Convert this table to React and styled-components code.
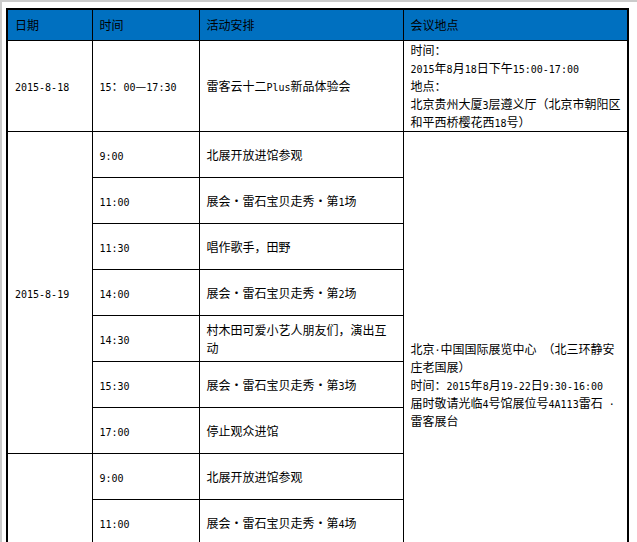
import React from 'react';
import styled, { createGlobalStyle } from 'styled-components';

const GlobalStyle = createGlobalStyle`
  html, body {
    margin: 0;
    background: #fff;
  }
`;

const Frame = styled.div`
  border-top: 2px solid #cbcbcb;
  border-left: 2px solid #cbcbcb;
  padding: 6px 0 0 4px;
  min-height: 100vh;
  box-sizing: border-box;
`;

const Table = styled.table`
  border-collapse: collapse;
  table-layout: fixed;
  width: 621px;
  border: 2px solid #000;
  font-family: "Noto Sans CJK SC", "Noto Sans", sans-serif;
  font-size: 12px;
  line-height: 18px;
  color: #000;
`;

const HeadCell = styled.th`
  background: #0070c0;
  border: 1px solid #000;
  height: 30px;
  padding: 0 7px;
  text-align: left;
  font-weight: normal;
  font-size: 12px;
`;

const Cell = styled.td`
  border: 1px solid #000;
  height: ${(p) => (p.$tall ? '90px' : '45px')};
  padding: 0 7px;
  vertical-align: middle;
  white-space: nowrap;
`;

const Ascii = styled.span`
  font-family: "DejaVu Sans Mono", "Liberation Mono", monospace;
  font-size: 10px;
  line-height: 12px;
`;

const Line = styled.div`
  white-space: nowrap;
`;

const mix = (s) =>
  s.split(/([\x20-\x7e\u00b7]+)/).map((part, i) =>
    /^[\x20-\x7e\u00b7]+$/.test(part) ? <Ascii key={i}>{part}</Ascii> : part
  );

const Lines = ({ lines }) =>
  lines.map((l, i) => <Line key={i}>{mix(l)}</Line>);

const venueOne = [
  '时间：',
  '2015年8月18日下午15:00-17:00',
  '地点：',
  '北京贵州大厦3层遵义厅（北京市朝阳区',
  '和平西桥樱花西18号）',
];

const venueTwo = [
  '北京·中国国际展览中心 （北三环静安',
  '庄老国展）',
  '时间：2015年8月19-22日9:30-16:00',
  '届时敬请光临4号馆展位号4A113雷石 ·',
  '雷客展台',
];

const dayTwo = [
  ['9:00', ['北展开放进馆参观']],
  ['11:00', ['展会・雷石宝贝走秀・第1场']],
  ['11:30', ['唱作歌手，田野']],
  ['14:00', ['展会・雷石宝贝走秀・第2场']],
  ['14:30', ['村木田可爱小艺人朋友们，演出互', '动']],
  ['15:30', ['展会・雷石宝贝走秀・第3场']],
  ['17:00', ['停止观众进馆']],
];

const dayThree = [
  ['9:00', ['北展开放进馆参观']],
  ['11:00', ['展会・雷石宝贝走秀・第4场']],
  ['11:30', ['唱作歌手，田野']],
  ['14:00', ['展会・雷石宝贝走秀・第5场']],
  ['14:30', ['村木田可爱小艺人朋友们，演出互', '动']],
  ['15:30', ['展会・雷石宝贝走秀・第6场']],
  ['17:00', ['停止观众进馆']],
];

// the venue cell of 8-19 also covers the first four rows of 8-20
const venueSpan = dayTwo.length + 4;

export default function App() {
  return (
    <>
      <GlobalStyle />
      <Frame>
        <Table>
          <colgroup>
            <col style={{ width: 85 }} />
            <col style={{ width: 107 }} />
            <col style={{ width: 204 }} />
            <col style={{ width: 225 }} />
          </colgroup>
          <thead>
            <tr>
              <HeadCell>日期</HeadCell>
              <HeadCell>时间</HeadCell>
              <HeadCell>活动安排</HeadCell>
              <HeadCell>会议地点</HeadCell>
            </tr>
          </thead>
          <tbody>
            <tr>
              <Cell $tall>{mix('2015-8-18')}</Cell>
              <Cell $tall>{mix('15：00—17:30')}</Cell>
              <Cell $tall>{mix('雷客云十二Plus新品体验会')}</Cell>
              <Cell $tall>
                <Lines lines={venueOne} />
              </Cell>
            </tr>
            {dayTwo.map(([time, act], i) => (
              <tr key={'b' + i}>
                {i === 0 && <Cell rowSpan={dayTwo.length}>{mix('2015-8-19')}</Cell>}
                <Cell>{mix(time)}</Cell>
                <Cell>
                  <Lines lines={act} />
                </Cell>
                {i === 0 && (
                  <Cell rowSpan={venueSpan}>
                    <Lines lines={venueTwo} />
                  </Cell>
                )}
              </tr>
            ))}
            {dayThree.map(([time, act], i) => (
              <tr key={'c' + i}>
                {i === 0 && <Cell rowSpan={dayThree.length}>{mix('2015-8-20')}</Cell>}
                <Cell>{mix(time)}</Cell>
                <Cell>
                  <Lines lines={act} />
                </Cell>
                {i === venueSpan - dayTwo.length && (
                  <Cell rowSpan={dayThree.length - i} />
                )}
              </tr>
            ))}
          </tbody>
        </Table>
      </Frame>
    </>
  );
}
